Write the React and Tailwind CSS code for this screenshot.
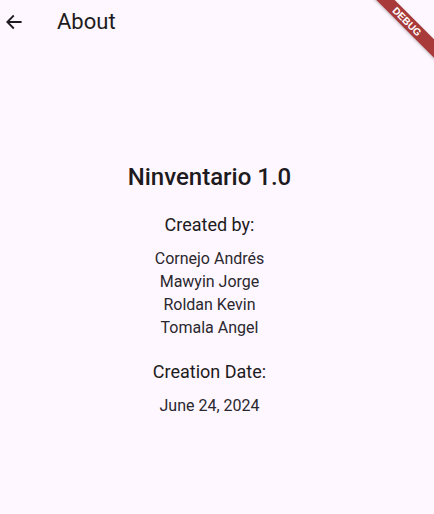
export default function App() {
  return (
    <div className="relative w-[434px] h-[514px] overflow-hidden bg-[#fef7ff] text-[#1d1b20] font-['Roboto',sans-serif]">
      <header className="flex items-center h-[44px]">
        <button className="w-[28px] h-[44px] flex items-center justify-center">
          <svg width="20" height="20" viewBox="0 0 24 24" fill="none" stroke="#1d1b20" strokeWidth="2.2" strokeLinecap="square">
            <path d="M20 12H5M11 5l-7 7 7 7" />
          </svg>
        </button>
        <h1 className="ml-[29px] text-[22px] leading-none">About</h1>
      </header>

      <main className="flex flex-col items-center pt-[118px] pr-[15px]">
        <h2 className="text-[24px] font-medium leading-[30px]">Ninventario 1.0</h2>
        <p className="mt-[21px] text-[18px] leading-[24px]">Created by:</p>
        <ul className="mt-[10px] flex flex-col items-center text-[16px] leading-[23px] text-[#2a282e]">
          <li>Cornejo Andrés</li>
          <li>Mawyin Jorge</li>
          <li>Roldan Kevin</li>
          <li>Tomala Angel</li>
        </ul>
        <p className="mt-[21px] text-[18px] leading-[24px]">Creation Date:</p>
        <p className="mt-[10px] text-[16px] leading-[23px] text-[#2a282e]">June 24, 2024</p>
      </main>

      <div className="absolute top-[15px] right-[-27px] w-[108px] h-[13px] rotate-45 bg-[#a83a3a] shadow-[0_1px_3px_rgba(0,0,0,0.25)] flex items-center justify-center">
        <span className="text-[10px] font-bold text-white leading-none font-['Liberation_Sans',sans-serif]">DEBUG</span>
      </div>
    </div>
  );
}
